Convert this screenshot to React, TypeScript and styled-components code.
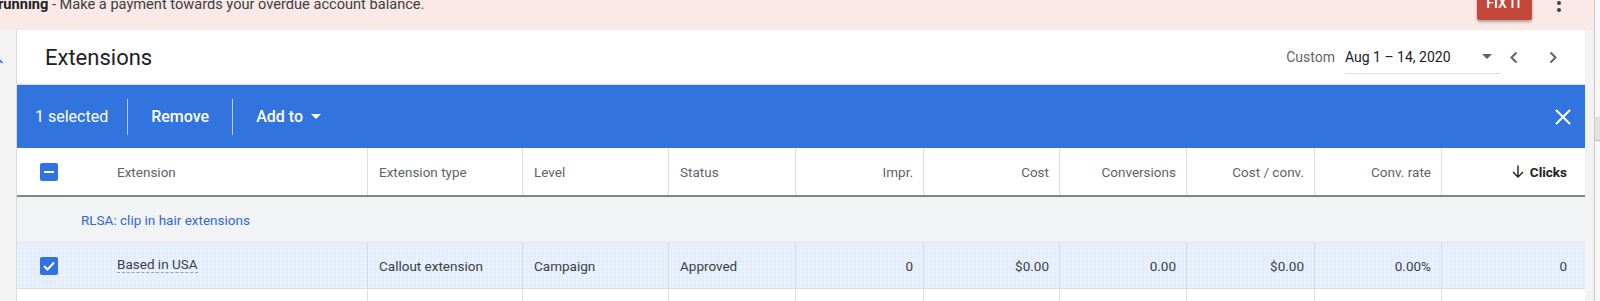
import styled, { createGlobalStyle } from "styled-components";

const GlobalStyle = createGlobalStyle`
  * { box-sizing: border-box; }
  html, body { margin: 0; height: 100%; overflow: hidden; }
  body {
    background: #f3f3f3;
    font-family: Roboto, "Liberation Sans", Arial, sans-serif;
    color: #3c4043;
  }
  #root { height: 100%; }
`;

const Page = styled.div`
  display: flex;
  height: 100%;
`;

const Main = styled.div`
  flex: 1;
  min-width: 0;
  display: flex;
  flex-direction: column;
`;

const ScrollTrack = styled.div`
  width: 6px;
  flex-shrink: 0;
  border-left: 1px solid #c9c9c9;
  background: #f7f7f7;
`;

const ScrollThumb = styled.div`
  margin-top: 117px;
  height: 24px;
  background: #e1e1e1;
  border-bottom: 1px solid #bdbdbd;
`;

/* bandeau d'alerte en haut */
const Banner = styled.div`
  height: 30px;
  flex-shrink: 0;
  background: #fae9e7;
  display: flex;
  align-items: flex-start;
  justify-content: space-between;
  padding-right: 23px;
  overflow: hidden;
`;

const BannerText = styled.div`
  margin: -6px 0 0 -2px;
  font-size: 14.6px;
  line-height: 20px;
  white-space: nowrap;
  color: #3c4043;

  b {
    font-weight: 700;
    color: #202124;
  }
`;

const BannerActions = styled.div`
  display: flex;
  align-items: flex-start;
  gap: 15px;
`;

const FixButton = styled.button`
  margin-top: -14px;
  width: 55px;
  height: 34px;
  border: none;
  border-radius: 2px;
  background: #c5473a;
  color: #fff;
  font-family: inherit;
  font-size: 14px;
  font-weight: 500;
  line-height: 20px;
  padding: 0;
  box-shadow: 0 2px 3px rgba(0, 0, 0, 0.3);
`;

const Kebab = styled.div`
  margin-top: -6px;
  width: 24px;
  display: flex;
  flex-direction: column;
  align-items: center;
  gap: 3px;
`;

const Dot = styled.span`
  width: 4px;
  height: 4px;
  border-radius: 50%;
  background: #3c4043;
`;

const Content = styled.div`
  flex: 1;
  min-height: 0;
  display: flex;
  overflow: hidden;
`;

const LeftRail = styled.div`
  width: 17px;
  flex-shrink: 0;
  border-right: 1px solid #dadce0;
  overflow: hidden;
  padding-top: 28px;

  svg {
    display: block;
    margin-left: -6px;
  }
`;

const RightGap = styled.div`
  flex: 1;
`;

const Card = styled.div`
  width: 1568px;
  flex-shrink: 0;
  background: #fff;
`;

const CardHeader = styled.div`
  height: 55px;
  display: flex;
  align-items: center;
  padding: 0 20px 0 28px;
  border-bottom: 1px solid #dadce0;
`;

const Title = styled.h1`
  flex: 1;
  margin: 0;
  font-size: 22px;
  font-weight: 400;
  color: #202124;
`;

const RangeLabel = styled.span`
  font-size: 14px;
  color: #5f6368;
  margin-right: 10px;
`;

const DateSelect = styled.div`
  width: 156px;
  height: 34px;
  display: flex;
  align-items: center;
  justify-content: space-between;
  padding-right: 9px;
  border-bottom: 1px solid #dadce0;
  font-size: 14px;
  color: #202124;
`;

const NavGroup = styled.div`
  display: flex;
  gap: 16px;
`;

const NavButton = styled.button`
  width: 24px;
  height: 24px;
  padding: 0;
  border: none;
  background: none;
  display: flex;
  align-items: center;
  justify-content: center;
`;

/* barre bleue de sélection */
const SelectionBar = styled.div`
  height: 63px;
  background: #3174de;
  color: #fff;
  display: flex;
  align-items: center;
  font-size: 16px;
`;

const SelectedCount = styled.span`
  padding: 0 19px 0 18px;
`;

const BarDivider = styled.span`
  width: 1px;
  height: 36px;
  background: rgba(255, 255, 255, 0.65);
`;

const BarButton = styled.button`
  height: 100%;
  padding: 0 23px;
  border: none;
  background: none;
  color: #fff;
  font-family: inherit;
  font-size: 16px;
  font-weight: 500;
  display: flex;
  align-items: center;
  gap: 8px;
`;

const CloseButton = styled.button`
  margin-left: auto;
  margin-right: 14px;
  padding: 0;
  border: none;
  background: none;
  display: flex;
`;

const COLS = "351px 155px 146px 127px 128px 136px 127px 128px 127px 143px";

const HeaderRow = styled.div`
  display: grid;
  grid-template-columns: ${COLS};
  height: 49px;
  border-bottom: 2px solid #80868b;
`;

const Row = styled.div<{ $selected?: boolean }>`
  display: grid;
  grid-template-columns: ${COLS};
  height: ${(p) => (p.$selected ? "46px" : "30px")};
  border-bottom: 1px solid #dadce0;
  background-color: ${(p) => (p.$selected ? "#e8f0fe" : "#fff")};
  background-image: ${(p) =>
    p.$selected
      ? "radial-gradient(rgba(110, 130, 170, 0.1) 0.6px, transparent 0.8px)"
      : "none"};
  background-size: 4px 4px;
`;

const Cell = styled.div<{ $num?: boolean; $last?: boolean; $head?: boolean; $lined?: string }>`
  display: flex;
  align-items: center;
  justify-content: ${(p) => (p.$num ? "flex-end" : "flex-start")};
  padding: 0 ${(p) => (p.$last ? "18px" : "10px")} 0 11px;
  border-right: ${(p) => (p.$last ? "none" : `1px solid ${p.$lined ?? "#e0e0e0"}`)};
  font-size: 13.5px;
  color: ${(p) => (p.$head ? "#5f6368" : "#3c4043")};
  white-space: nowrap;
`;

const FirstCell = styled(Cell)`
  padding-left: 23px;
  gap: 59px;
`;

const SortLabel = styled.span`
  display: flex;
  align-items: center;
  gap: 6px;
  font-weight: 700;
  color: #202124;
`;

const GroupRow = styled.div`
  height: 46px;
  display: flex;
  align-items: center;
  padding-left: 64px;
  background: #f1f3f4;
  border-bottom: 1px solid #e3e5e8;
  font-size: 13.5px;
  color: #3367d6;
`;

const Checkbox = styled.span`
  width: 18px;
  height: 18px;
  flex-shrink: 0;
  border-radius: 2px;
  background: #2f72e0;
  display: flex;
  align-items: center;
  justify-content: center;
`;

const Dash = styled.span`
  width: 10px;
  height: 2px;
  background: #fff;
`;

const Dotted = styled.span`
  line-height: 16px;
  border-bottom: 1px dashed #9aa0a6;
  margin-top: -2px;
`;

const columns = [
  { label: "Extension type" },
  { label: "Level" },
  { label: "Status" },
  { label: "Impr.", num: true },
  { label: "Cost", num: true },
  { label: "Conversions", num: true },
  { label: "Cost / conv.", num: true },
  { label: "Conv. rate", num: true },
  { label: "Clicks", num: true, sorted: true },
];

const rowValues = [
  "Callout extension",
  "Campaign",
  "Approved",
  "0",
  "$0.00",
  "0.00",
  "$0.00",
  "0.00%",
  "0",
];

const Chevron = ({ dir }: { dir: "left" | "right" }) => (
  <svg width="9" height="13" viewBox="0 0 9 13">
    <path
      d={dir === "left" ? "M7.5 1.5 L2.5 6.5 L7.5 11.5" : "M1.5 1.5 L6.5 6.5 L1.5 11.5"}
      fill="none"
      stroke="#5f6368"
      strokeWidth="2"
    />
  </svg>
);

export default function App() {
  const last = columns.length - 1;

  return (
    <>
      <GlobalStyle />
      <Page>
        <Main>
          <Banner>
            <BannerText>
              <b>running</b> - Make a payment towards your overdue account balance.
            </BannerText>
            <BannerActions>
              <FixButton>FIX IT</FixButton>
              <Kebab>
                <Dot />
                <Dot />
                <Dot />
              </Kebab>
            </BannerActions>
          </Banner>

          <Content>
            <LeftRail>
              <svg width="10" height="10" viewBox="0 0 10 10">
                <path d="M5 9.5 V1.5 M1.5 5 L5 1.5 L8.5 5" fill="none" stroke="#1a73e8" strokeWidth="1.6" />
              </svg>
            </LeftRail>

            <Card>
              <CardHeader>
                <Title>Extensions</Title>
                <RangeLabel>Custom</RangeLabel>
                <DateSelect>
                  <span>Aug 1 – 14, 2020</span>
                  <svg width="10" height="5" viewBox="0 0 10 5">
                    <path d="M0 0 H10 L5 5 Z" fill="#5f6368" />
                  </svg>
                </DateSelect>
                <NavGroup>
                  <NavButton>
                    <Chevron dir="left" />
                  </NavButton>
                  <NavButton>
                    <Chevron dir="right" />
                  </NavButton>
                </NavGroup>
              </CardHeader>

              <SelectionBar>
                <SelectedCount>1 selected</SelectedCount>
                <BarDivider />
                <BarButton>Remove</BarButton>
                <BarDivider />
                <BarButton>
                  Add to
                  <svg width="10" height="5" viewBox="0 0 10 5">
                    <path d="M0 0 H10 L5 5 Z" fill="#fff" />
                  </svg>
                </BarButton>
                <CloseButton>
                  <svg width="16" height="16" viewBox="0 0 16 16">
                    <path d="M1 1 L15 15 M15 1 L1 15" stroke="#fff" strokeWidth="2" />
                  </svg>
                </CloseButton>
              </SelectionBar>

              <HeaderRow>
                <FirstCell $head>
                  <Checkbox>
                    <Dash />
                  </Checkbox>
                  Extension
                </FirstCell>
                {columns.map((c, i) => (
                  <Cell key={c.label} $head $num={c.num} $last={i === last}>
                    {c.sorted ? (
                      <SortLabel>
                        <svg width="12" height="13" viewBox="0 0 12 13">
                          <path d="M6 0.5 V12 M1 7 L6 12 L11 7" fill="none" stroke="#202124" strokeWidth="1.4" />
                        </svg>
                        {c.label}
                      </SortLabel>
                    ) : (
                      c.label
                    )}
                  </Cell>
                ))}
              </HeaderRow>

              <GroupRow>RLSA: clip in hair extensions</GroupRow>

              <Row $selected>
                <FirstCell $lined="#d5dce8">
                  <Checkbox>
                    <svg width="12" height="10" viewBox="0 0 12 10">
                      <path d="M1 5 L4.5 8.5 L11 1.5" fill="none" stroke="#fff" strokeWidth="2" />
                    </svg>
                  </Checkbox>
                  <Dotted>Based in USA</Dotted>
                </FirstCell>
                {rowValues.map((v, i) => (
                  <Cell key={i} $num={columns[i].num} $last={i === last} $lined="#d5dce8">
                    {v}
                  </Cell>
                ))}
              </Row>

              <Row>
                <FirstCell />
                {columns.map((c, i) => (
                  <Cell key={c.label} $last={i === last} />
                ))}
              </Row>
            </Card>

            <RightGap />
          </Content>
        </Main>
        <ScrollTrack>
          <ScrollThumb />
        </ScrollTrack>
      </Page>
    </>
  );
}
